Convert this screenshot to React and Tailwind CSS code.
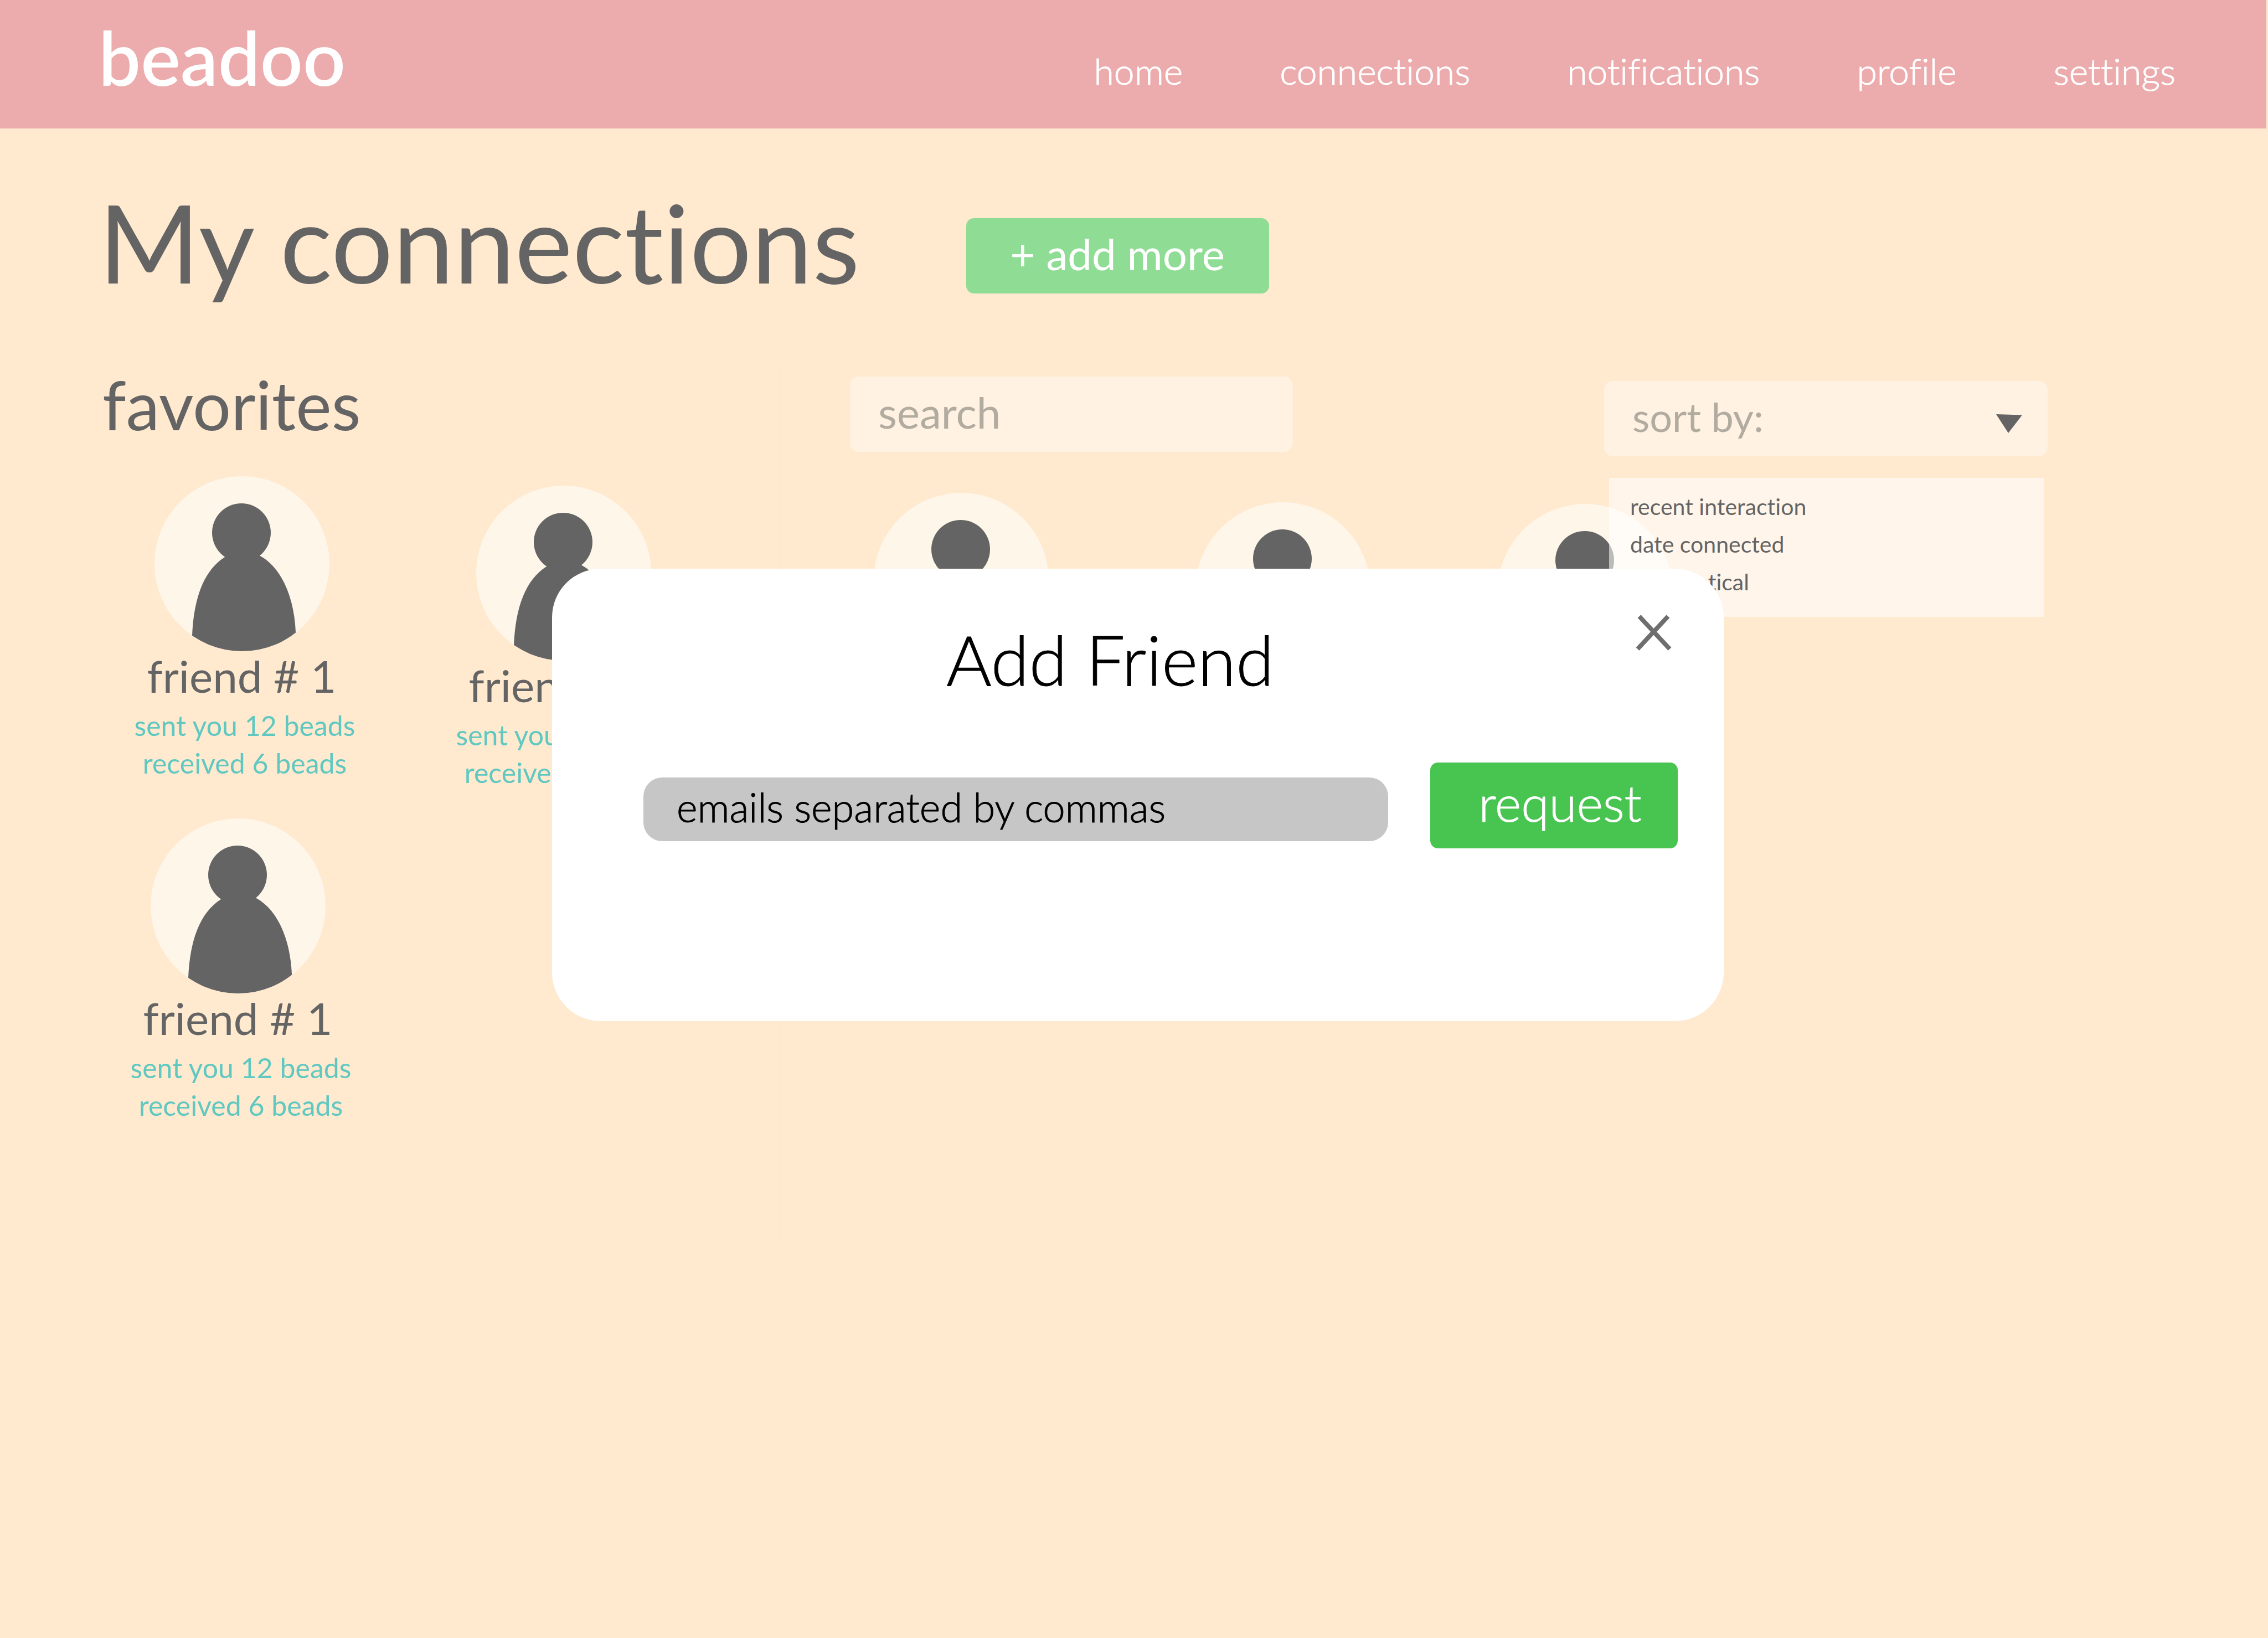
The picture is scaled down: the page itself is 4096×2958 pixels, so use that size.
import React, { useId } from "react";

const NAV = ["home", "connections", "notifications", "profile", "settings"];
const SORTS = ["recent interaction", "date connected", "alphabetical"];
const FAVORITES = [
  { id: 1, name: "friend # 1", place: "" },
  { id: 2, name: "friend # 1", place: "mt-[17px]" },
  { id: 3, name: "friend # 1", place: "pr-[14px]" },
];
const FRIENDS = [
  { id: 4, name: "friend # 1", place: "" },
  { id: 5, name: "friend # 1", place: "mt-[17px]" },
  { id: 6, name: "friend # 1", place: "mt-[20px]" },
];

function Avatar() {
  const clip = useId();
  return (
    <svg viewBox="0 0 316 316" className="size-[316px]" aria-hidden="true">
      <clipPath id={clip}>
        <circle cx="158" cy="158" r="158" />
      </clipPath>
      <circle cx="158" cy="158" r="158" fill="#fff6ea" />
      <g clipPath={`url(#${clip})`} fill="#646464">
        <circle cx="157" cy="102" r="53" />
        <path d="M68 316V287C71 220 89 170 127 146Q158 128 191 144C229 165 252 217 255 281V316Z" />
      </g>
    </svg>
  );
}

function Friend({ name, place }) {
  return (
    <li className={`flex flex-col items-center ${place}`}>
      <Avatar />
      <h3 className="text-[80px] leading-[88px] whitespace-nowrap">{name}</h3>
      <p className="mt-3 pl-[11px] text-center text-[50px] leading-[68px] whitespace-nowrap text-[#5fc8c1]">
        sent you 12 beads
        <br />
        received 6 beads
      </p>
    </li>
  );
}

function Header() {
  return (
    <header className="mr-[3px] flex h-[232px] items-start justify-between bg-[#ecabac] pt-[36px] pr-[164px] pl-[178px] text-white">
      <a href="#home" className="text-[135px] leading-none font-semibold">
        beadoo
      </a>
      <nav className="mt-[59px] flex gap-[175px] text-[66px] leading-none font-light [-webkit-text-stroke:1px]">
        {NAV.map((item) => (
          <a key={item} href={`#${item}`}>
            {item}
          </a>
        ))}
      </nav>
    </header>
  );
}

function SortBy() {
  return (
    <div className="relative mt-2 w-[801px]">
      <select
        aria-label="sort by"
        defaultValue=""
        className="block h-[136px] w-full appearance-none rounded-[16px] bg-[#fff2e2] pb-2 pl-[51px] text-[72px] text-[#b2aba0]"
      >
        <option value="">sort by:</option>
        {SORTS.map((s) => (
          <option key={s}>{s}</option>
        ))}
      </select>
      <svg viewBox="0 0 47 34" className="pointer-events-none absolute top-[60px] right-[46px] h-[34px] w-[47px]" aria-hidden="true">
        <path d="M0 0L47 1.5L22 34Z" fill="#646464" />
      </svg>
      <ul className="absolute top-[175px] left-[9px] z-10 w-[785px] bg-white/56 pt-[18px] pb-[29px] pl-[38px] text-[41px] leading-[68px]">
        {SORTS.map((s) => (
          <li key={s}>
            <button type="button" className="block">
              {s}
            </button>
          </li>
        ))}
      </ul>
    </div>
  );
}

function AddFriendDialog() {
  return (
    <div className="absolute inset-x-0 top-0 z-20 flex justify-center pt-[1027px] pl-[14px]">
      <div role="dialog" aria-labelledby="dialog-title" className="w-[2116px] rounded-[88px] bg-white pt-[83px] pb-[312px] text-black">
        <div className="flex items-start justify-between pr-[94px] pl-[712px]">
          <h2 id="dialog-title" className="mt-[18px] -mb-[3px] text-[125px] leading-none font-light [-webkit-text-stroke:1px]">
            Add Friend
          </h2>
          <button type="button" aria-label="Close">
            <svg viewBox="0 0 65 65" className="size-[65px]" fill="none" stroke="#6e6e6e" strokeWidth="8" aria-hidden="true">
              <path d="M6.500 3L61.500 62M58.500 3L3.500 62" />
            </svg>
          </button>
        </div>
        <form className="mt-[127px] flex items-start gap-[76px] pr-[83px] pl-[165px] font-light [-webkit-text-stroke:1px]">
          <input
            type="text"
            aria-label="Friend emails"
            placeholder="emails separated by commas"
            className="mt-[27px] h-[115px] min-w-0 flex-1 rounded-[34px] bg-[#c6c6c6] pb-[10px] pl-[60px] text-[72px] placeholder:text-black"
          />
          <button type="button" className="h-[155px] w-[447px] rounded-[14px] bg-[#47c550] pb-[12px] pl-[22px] text-[91px] leading-none text-white">
            request
          </button>
        </form>
      </div>
    </div>
  );
}

export default function App() {
  return (
    <div className="relative min-h-screen bg-[#ffe9cf] font-['Lato',sans-serif] text-[#646464] [font-variant-ligatures:none]">
      <Header />
      <main>
        <div className="flex items-start gap-[192px] pt-[106px] pl-[178px]">
          <h1 className="text-[197px] leading-[196px] whitespace-nowrap">My connections</h1>
          <button type="button" className="mt-[56px] h-[136px] w-[547px] rounded-[14px] bg-[#8fdd94] pb-[8px] text-[78px] leading-none text-white">
            + add more
          </button>
        </div>
        <div className="mt-[121px] flex min-h-[1592px]">
          <section className="w-[34.375%] pt-[14px]">
            <h2 className="pl-[185px] text-[122px] leading-none">favorites</h2>
            <ul className="mt-[69px] grid grid-cols-[581px_581px] items-start gap-y-[49px] pl-[146px]">
              {FAVORITES.map((f) => (
                <Friend key={f.id} {...f} />
              ))}
            </ul>
          </section>
          <section className="flex-1 border-l border-[#fde2c6] pt-[25px]">
            <div className="flex items-start justify-between pr-[398px] pl-[126px]">
              <input
                type="search"
                aria-label="Search connections"
                placeholder="search"
                className="h-[136px] w-[800px] rounded-[16px] bg-[#fff2e2] pb-[8px] pl-[51px] text-[78px] placeholder:text-[#b2aba0]"
              />
              <SortBy />
            </div>
            <ul className="mt-[66px] grid grid-cols-[581px_581px_511px] items-start pl-[36px]">
              {FRIENDS.map((f) => (
                <Friend key={f.id} {...f} />
              ))}
            </ul>
          </section>
        </div>
      </main>
      <AddFriendDialog />
    </div>
  );
}
